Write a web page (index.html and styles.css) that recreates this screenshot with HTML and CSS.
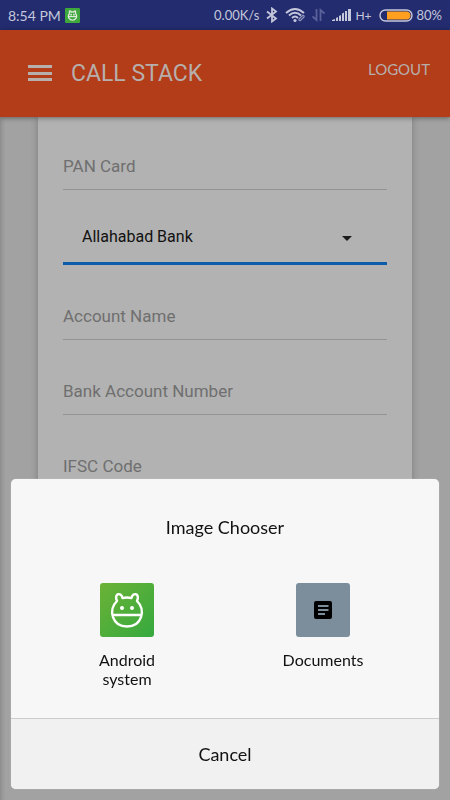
FILE: index.html
```html
<!DOCTYPE html>
<html lang="en">
<head>
<meta charset="utf-8">
<meta name="viewport" content="width=device-width, initial-scale=1">
<title>Call Stack</title>
<link rel="stylesheet" href="styles.css">
</head>
<body>
<div class="status">
  <span class="time">8:54 PM</span>
  <svg class="badge" width="15" height="15" viewBox="0 0 54 54"><rect width="54" height="54" rx="4" fill="#3fa83c"/><g fill="none" stroke="#e6efe6" stroke-width="4"><path d="M16 20C13 7 22 9 22 15Q27 13 32 15C32 9 41 7 38 20C48 32 37 44 27 44S6 32 16 20Z"/><path d="M13 31H41"/></g><g fill="#e6efe6"><circle cx="22" cy="24" r="3"/><circle cx="32" cy="24" r="3"/></g></svg>
  <span class="speed">0.00K/s</span>
  <svg class="bluetooth" width="12" height="16" viewBox="0 0 12 16" fill="none" stroke="#c5c7db" stroke-width="1.8"><path d="M1 4.500L10 11.500L6 14.500V1.500L10 4.500L1 11.500"/></svg>
  <svg class="wifi" width="22" height="16" viewBox="0 0 22 16" fill="none" stroke="#c5c7db" stroke-width="2"><path d="M1 6Q10-2 19 6M4 8.500Q10 3 16 8.500M7 11Q10 8 13 11"/><circle cx="10" cy="13.500" r="1.600" fill="#c5c7db" stroke="none"/><path d="M14 12l3.500-3.500q2-.5 1.500 1.500L15.500 13.500q-2 .5-1.500-1.500Z" stroke="#8f94bd" stroke-width="1.300"/></svg>
  <svg class="transfer" width="13" height="14" viewBox="0 0 13 14" fill="none" stroke="#5b629b" stroke-width="1.800"><path d="M4.500 1V12L.5 8.500M8.500 13V2L12.500 5.500"/></svg>
  <svg class="signal" width="19" height="14" viewBox="0 0 19 14" fill="#c5c7db"><path d="M0 13v-1l3-1v2zM4 10l2-1v4H4zM7 8l2-1v6H7zM10 5.500l2-1V13h-2zM13 3h2v10h-2zM16 1h3v12h-3z"/></svg>
  <span class="network">H+</span>
  <svg class="battery" width="34" height="13" viewBox="0 0 34 13"><rect x="1" y="1" width="32" height="11" rx="5.500" fill="none" stroke="#c5c7db" stroke-width="1.400"/><path d="M8 2.500H28.500Q31.500 3.500 31.500 6.500T28.500 10.500H8Z" fill="#ff9f20"/></svg>
  <span>80%</span>
</div>
<header class="appbar">
  <button class="menu" aria-label="Menu"><svg width="24" height="17" viewBox="0 0 24 17" fill="#b7afac"><path d="M0 0H24V3H0zM0 7H24V10H0zM0 13H24V16H0z"/></svg></button>
  <h1>CALL STACK</h1>
  <a class="logout" href="#">LOGOUT</a>
</header>
<main class="page">
  <form class="card">
    <input class="field" type="text" placeholder="PAN Card" aria-label="PAN Card">
    <div class="picker">
      <select class="field bank" aria-label="Bank"><option>Allahabad Bank</option></select>
      <svg class="caret" width="10" height="5" viewBox="0 0 10 5"><path d="M0 0H10L5 5Z" fill="#1c1c1c"/></svg>
    </div>
    <input class="field" type="text" placeholder="Account Name" aria-label="Account Name">
    <input class="field" type="text" placeholder="Bank Account Number" aria-label="Bank Account Number">
    <input class="field" type="text" placeholder="IFSC Code" aria-label="IFSC Code">
  </form>
</main>
<section class="chooser" role="dialog" aria-labelledby="chooser-title">
  <h2 id="chooser-title">Image Chooser</h2>
  <div class="apps">
    <button class="app">
      <svg width="54" height="54" viewBox="0 0 54 54"><defs><linearGradient id="leaf" x1="0" y1="0" x2="1" y2="1"><stop offset="0" stop-color="#6bb236"/><stop offset="1" stop-color="#35a93f"/></linearGradient></defs><rect width="54" height="54" rx="3" fill="url(#leaf)"/><g fill="none" stroke="#fff" stroke-width="2.400" stroke-linejoin="round"><path d="M17 18C13.500 10 21.500 9 22.500 15Q27 14 31.500 15C32.500 9 40.500 10 37 18C46 27 42 43.500 27 43.500S8 27 17 18Z"/><path d="M12.500 32H41.500"/></g><g fill="#fff"><circle cx="22" cy="25" r="2"/><circle cx="32" cy="25" r="2"/></g></svg>
      <span>Android system</span>
    </button>
    <button class="app">
      <svg width="54" height="54" viewBox="0 0 54 54"><rect width="54" height="54" rx="3" fill="#7c8e9c"/><rect x="18" y="18" width="18" height="18" rx="2" fill="#000"/><path d="M22 22H32.500V24H22zM22 26H32.500V28H22zM22 30H29V32H22z" fill="#7c8e9c"/></svg>
      <span>Documents</span>
    </button>
  </div>
  <button class="cancel">Cancel</button>
</section>
</body>
</html>
```
FILE: styles.css
```css
* { box-sizing: border-box; }
body {
  margin: 0;
  min-height: 100vh;
  display: flex;
  flex-direction: column;
  background: #a2a2a2;
  font-family: Roboto, sans-serif;
}
button { border: 0; padding: 0; background: none; color: inherit; font: inherit; }
.status, .logout, .chooser { font-family: Lato, sans-serif; }
.status {
  display: flex;
  align-items: center;
  height: 30px;
  padding: 0 8px;
  background: #232c6f;
  color: #c5c7db;
  font-size: 13px;
}
.status svg { flex: none; }
.time { font-size: 14px; }
.badge { margin-left: 4px; }
.speed { margin-left: auto; }
.bluetooth { margin-left: 7px; }
.wifi { margin-left: 7px; }
.transfer { margin-left: 5px; }
.signal { margin-left: 7px; }
.network { margin-left: 4px; font-size: 12px; }
.battery { margin: 0 4px 0 7px; }
.appbar {
  display: flex;
  align-items: center;
  height: 87px;
  padding: 0 20px 0 28px;
  background: #b33c19;
  color: #b7afac;
  box-shadow: 0 1px 5px rgba(0, 0, 0, .4);
  z-index: 1;
}
.menu { display: flex; }
h1 { margin: 0 0 0 19px; font-size: 23px; font-weight: 400; }
.logout { margin: 0 0 10px auto; color: inherit; font-size: 15px; text-decoration: none; }
.page { padding: 0 38px; box-shadow: inset 5px 0 5px -4px rgba(0, 0, 0, .2); flex: 1; }
.card {
  display: flex;
  flex-direction: column;
  gap: 28px;
  padding: 26px 25px;
  background: #b2b2b2;
  box-shadow: 0 0 7px rgba(0, 0, 0, .25);
}
.field {
  width: 100%;
  height: 47px;
  padding: 0;
  border: 0;
  border-bottom: 1px solid #939393;
  border-radius: 0;
  outline: 0;
  background: transparent;
  color: #111;
  font: 17px Roboto, sans-serif;
}
.field::placeholder { color: #6f6f6f; opacity: 1; }
.picker { display: grid; align-items: center; }
.picker > * { grid-area: 1 / 1; }
.bank {
  appearance: none;
  padding: 0 60px 8px 19px;
  border-bottom: 3px solid #0b5cab;
  font-size: 16px;
}
.caret { justify-self: end; margin: 0 35px 6px 0; pointer-events: none; }
.chooser {
  position: fixed;
  right: 11px;
  bottom: 11px;
  left: 11px;
  z-index: 2;
  overflow: hidden;
  border-radius: 5px;
  background: #f7f7f7;
  box-shadow: 0 0 1px #ddd;
  color: #111;
}
h2 { margin: 0; padding: 36px 0 44px; font-size: 18px; font-weight: 400; line-height: 24px; text-align: center; }
.apps { display: grid; grid-template-columns: 1fr 1fr; padding: 0 18px 30px; }
.app { display: flex; flex-direction: column; align-items: center; gap: 13px; font-size: 16px; line-height: 19px; }
.app span { max-width: 90px; }
.cancel { display: block; width: 100%; height: 71px; border-top: 1px solid #ccc; background: #f1f1f1; font-size: 18px; }
```
